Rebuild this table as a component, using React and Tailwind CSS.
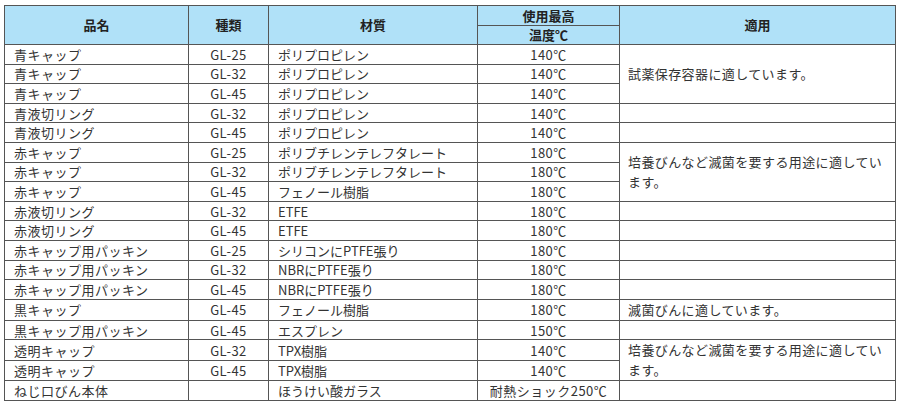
import React from 'react';

const rows = [
  ['青キャップ', 'GL-25', 'ポリプロピレン', '140℃'],
  ['青キャップ', 'GL-32', 'ポリプロピレン', '140℃'],
  ['青キャップ', 'GL-45', 'ポリプロピレン', '140℃'],
  ['青液切リング', 'GL-32', 'ポリプロピレン', '140℃'],
  ['青液切リング', 'GL-45', 'ポリプロピレン', '140℃'],
  ['赤キャップ', 'GL-25', 'ポリブチレンテレフタレート', '180℃'],
  ['赤キャップ', 'GL-32', 'ポリブチレンテレフタレート', '180℃'],
  ['赤キャップ', 'GL-45', 'フェノール樹脂', '180℃'],
  ['赤液切リング', 'GL-32', 'ETFE', '180℃'],
  ['赤液切リング', 'GL-45', 'ETFE', '180℃'],
  ['赤キャップ用パッキン', 'GL-25', 'シリコンにPTFE張り', '180℃'],
  ['赤キャップ用パッキン', 'GL-32', 'NBRにPTFE張り', '180℃'],
  ['赤キャップ用パッキン', 'GL-45', 'NBRにPTFE張り', '180℃'],
  ['黒キャップ', 'GL-45', 'フェノール樹脂', '180℃'],
  ['黒キャップ用パッキン', 'GL-45', 'エスプレン', '150℃'],
  ['透明キャップ', 'GL-32', 'TPX樹脂', '140℃'],
  ['透明キャップ', 'GL-45', 'TPX樹脂', '140℃'],
  ['ねじ口びん本体', '', 'ほうけい酸ガラス', '耐熱ショック250℃'],
];

// 適用 column: row index -> [rowSpan, text]; rows covered by a span are skipped
const usage = {
  0: [3, '試薬保存容器に適しています。'],
  3: [1, ''],
  4: [1, ''],
  5: [3, '培養びんなど滅菌を要する用途に適しています。'],
  8: [1, ''],
  9: [1, ''],
  10: [1, ''],
  11: [1, ''],
  12: [1, ''],
  13: [1, '滅菌びんに適しています。'],
  14: [1, ''],
  15: [2, '培養びんなど滅菌を要する用途に適しています。'],
  17: [1, ''],
};

const cell = 'border border-[#555] h-[19.6px] p-0 leading-[17px]';

export default function App() {
  return (
    <div className="bg-white w-[900px] h-[403px] pt-[5px] pl-[4px] font-['Noto_Sans_CJK_JP',sans-serif] text-[13px] text-[#333]">
      <table className="border-collapse table-fixed w-[891px]">
        <colgroup>
          <col className="w-[184px]" />
          <col className="w-[80px]" />
          <col className="w-[209px]" />
          <col className="w-[142px]" />
          <col className="w-[276px]" />
        </colgroup>
        <thead>
          <tr className="bg-[#b0e1f8] font-bold text-[#222]">
            <th rowSpan={2} className="border border-[#555] font-bold p-0">品名</th>
            <th rowSpan={2} className="border border-[#555] font-bold p-0">種類</th>
            <th rowSpan={2} className="border border-[#555] font-bold p-0">材質</th>
            <th className="border border-[#555] font-bold p-0 h-[20px] leading-[17px]">使用最高</th>
            <th rowSpan={2} className="border border-[#555] font-bold p-0">適用</th>
          </tr>
          <tr className="bg-[#b0e1f8] text-[#222]">
            <th className="border border-[#555] font-bold p-0 h-[19px] leading-[16px]">温度℃</th>
          </tr>
        </thead>
        <tbody>
          {rows.map((r, i) => (
            <tr key={i}>
              <td className={`${cell} pl-[9px] tracking-[0.5px]`}>{r[0]}</td>
              <td className={`${cell} text-center tracking-[0.5px]`}>{r[1]}</td>
              <td className={`${cell} pl-[9px]`}>{r[2]}</td>
              <td className={`${cell} text-center tracking-[0.5px]`}>{r[3]}</td>
              {usage[i] && (
                <td rowSpan={usage[i][0]} className="border border-[#555] p-0 pl-[8px] pr-[8px] leading-[20px] tracking-[0.4px]">
                  {usage[i][1]}
                </td>
              )}
            </tr>
          ))}
        </tbody>
      </table>
    </div>
  );
}
